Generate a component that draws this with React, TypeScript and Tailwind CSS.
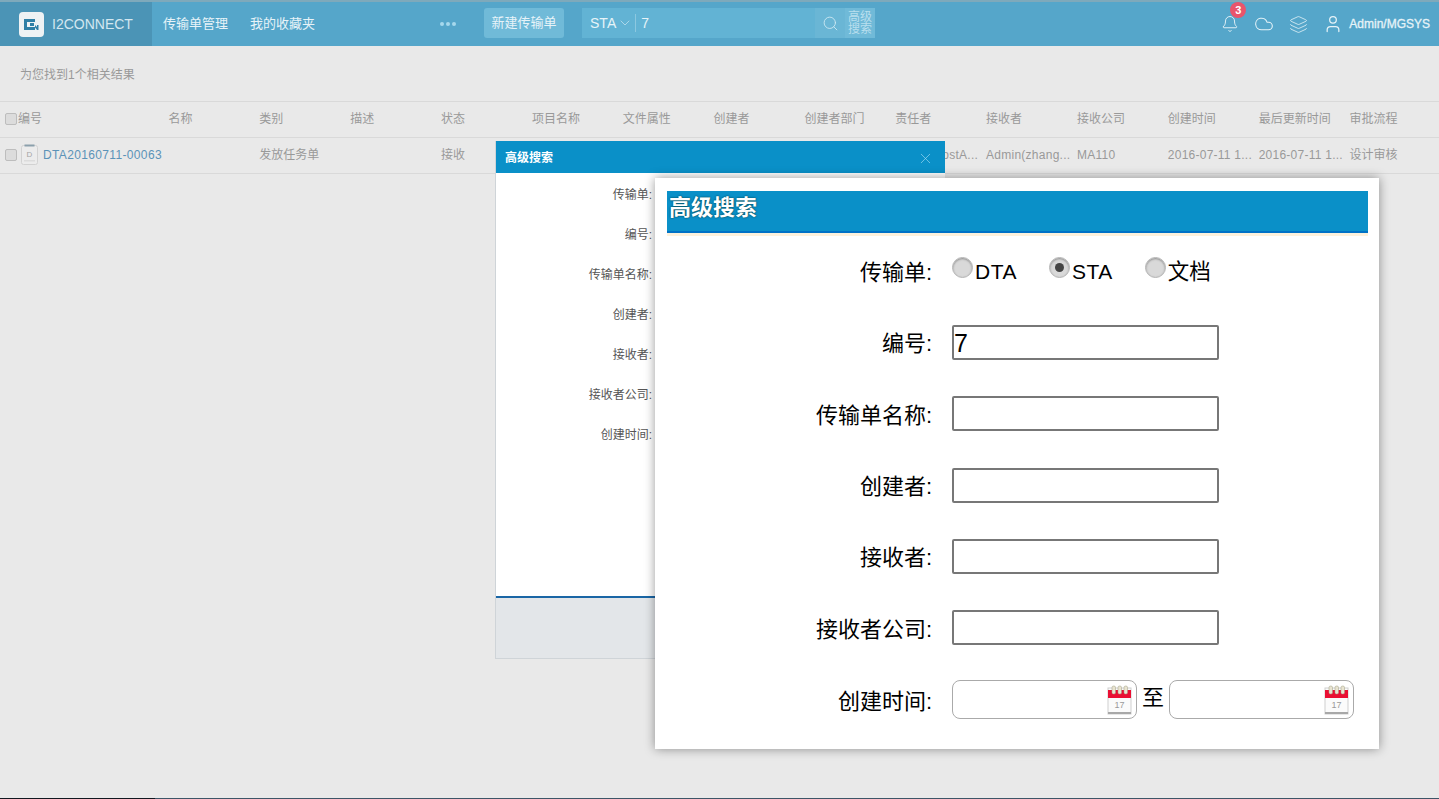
import { Bell, Cloud, Layers, User, Search, ChevronDown, X } from "lucide-react";

const cjk = "[font-family:Liberation_Sans,Arial,Noto_Sans_CJK_SC,sans-serif]";

const headers = ["名称", "类别", "描述", "状态", "项目名称", "文件属性", "创建者", "创建者部门", "责任者", "接收者", "接收公司", "创建时间", "最后更新时间", "审批流程"];
const cells = ["", "发放任务单", "", "接收", "", "", "", "", "", "Admin(zhang...", "MA110", "2016-07-11 1...", "2016-07-11 1...", "设计审核"];
const modalLabels = ["传输单:", "编号:", "传输单名称:", "创建者:", "接收者:", "接收者公司:", "创建时间:"];

function Check() {
  return <span className="block w-3 h-3 shrink-0 rounded-[2px] border border-[#bdbdbd] bg-[#dcdcdc]" />;
}

function Logo() {
  return (
    <svg width="25" height="25" viewBox="0 0 25 25">
      <rect width="25" height="25" rx="4" fill="#eef2f4" />
      <path d="M5 7h11v3H8v5h8v3H5z" fill="#2f7fa6" />
      <path d="M11 11h4v3h-4z" fill="#2f7fa6" />
      <path d="M16 13l2 2v-2h1.5v5H18l-2-2.500z" fill="#2f7fa6" />
    </svg>
  );
}

function FileIcon() {
  return (
    <svg width="17" height="21" viewBox="0 0 17 21" className="block shrink-0">
      <rect x="0.500" y="1.500" width="16" height="19" rx="2" fill="#ececec" stroke="#d2d2d2" />
      <rect x="3.500" y="0.500" width="10" height="2" fill="#8ba0ac" />
      <text x="8.500" y="13" textAnchor="middle" fontSize="8" fill="#a5a5a5" fontFamily="Liberation Sans">D</text>
      <rect x="3" y="16" width="11" height="1.500" fill="#dcdcdc" />
    </svg>
  );
}

function Calendar() {
  return (
    <svg width="26" height="30" viewBox="0 0 26 30" className="block shrink-0">
      <rect x="1" y="3" width="23" height="26" fill="#fbfbfb" stroke="#cfcfcf" />
      <rect x="1" y="5" width="23" height="8" fill="#ea0f33" />
      <rect x="5" y="1" width="3.500" height="8" rx="1.500" fill="#e9e4d0" stroke="#9c9c80" strokeWidth="0.500" />
      <rect x="11" y="1" width="3.500" height="8" rx="1.500" fill="#e9e4d0" stroke="#9c9c80" strokeWidth="0.500" />
      <rect x="17" y="1" width="3.500" height="8" rx="1.500" fill="#e9e4d0" stroke="#9c9c80" strokeWidth="0.500" />
      <text x="12.500" y="23" textAnchor="middle" fontSize="9" fill="#9a9a9a" fontFamily="Liberation Sans">17</text>
      <rect x="1" y="27" width="23" height="2" fill="#a8a8a8" />
    </svg>
  );
}

function Radio({ on }: { on?: boolean }) {
  return (
    <span className="flex items-center justify-center w-[21px] h-[21px] -mt-2 shrink-0 rounded-full border border-[#b5b5b5] bg-[#d9d9d9] shadow-[inset_0_1px_2px_#8f8f8f]">
      {on && <span className="block w-[9px] h-[9px] rounded-full bg-[#444]" />}
    </span>
  );
}

function FormRow({ label, children }: { label: string; children: React.ReactNode }) {
  return (
    <div className="flex items-center h-[71.300px]">
      <div className="w-[265px] mt-1 text-right text-[22px] leading-none text-black">{label}</div>
      <div className="ml-5 flex items-center">{children}</div>
    </div>
  );
}

function TextBox({ value }: { value?: string }) {
  return (
    <div className="w-[267px] h-[35px] border-2 border-[#777] rounded-[2px] bg-white text-[25px] leading-8 text-black">
      {value}
    </div>
  );
}

function DateBox() {
  return (
    <div className="w-[185px] h-[39px] flex items-center justify-end rounded-[8px] border border-[#aaa] bg-white">
      <Calendar />
      <span className="w-[3px]" />
    </div>
  );
}

export default function App() {
  return (
    <div className={`relative w-[1439px] h-[799px] overflow-hidden flex flex-col bg-[#e9e9e9] ${cjk}`}>
      <header className="h-[46px] shrink-0 flex items-stretch border-t-2 border-[#7ea9bb] bg-[#55a6ca] text-[#e6f3f8]">
        <div className="w-[152px] shrink-0 flex items-center pl-[19px] bg-[#4b94b6]">
          <Logo />
          <span className="ml-2 text-sm text-[#d3e7f0]">I2CONNECT</span>
        </div>
        <nav className="flex items-center text-[13px] pl-[11px] gap-[22px]">
          <span>传输单管理</span>
          <span>我的收藏夹</span>
        </nav>
        <div className="ml-[125px] flex items-center gap-[2px]">
          <span className="w-1 h-1 rounded-full bg-[#a6d8ec]" />
          <span className="w-1 h-1 rounded-full bg-[#a6d8ec]" />
          <span className="w-1 h-1 rounded-full bg-[#a6d8ec]" />
        </div>
        <div className="ml-7 flex items-center">
          <button className="w-20 h-[30px] -mt-[2px] rounded-[3px] bg-[#70bad8] text-[13px] text-[#e6f3f8]">新建传输单</button>
          <div className="ml-[18px] w-[233px] h-[30px] -mt-[2px] flex items-center pl-2 bg-[#62b3d4] text-[14px]">
            <span>STA</span>
            <ChevronDown size={16} strokeWidth={1} className="ml-px text-[#cfe8f3]" />
            <span className="ml-[2px] w-px h-[18px] bg-[#8cc8e0]" />
            <span className="ml-[5px]">7</span>
          </div>
          <div className="w-[30px] h-[30px] -mt-[2px] flex items-center justify-center bg-[#6ab6d5]">
            <Search size={17} strokeWidth={1.250} className="text-[#cde8f3]" />
          </div>
          <div className="w-[30px] h-[30px] -mt-[2px] flex items-center justify-center text-center bg-[#70bad8] text-[12px] leading-3 text-[#b9dfee]">
            高级<br />搜索
          </div>
        </div>
        <div className="ml-auto pr-[9px] flex items-center text-[#e6f3f8]">
          <div className="relative">
            <Bell size={18} strokeWidth={1.250} />
            <span className="absolute -top-[13px] left-[9px] w-4 h-4 rounded-full bg-[#e9546b] text-[11px] leading-4 font-bold text-center text-[#fff]">3</span>
          </div>
          <Cloud size={20} strokeWidth={1.250} className="ml-[15px]" />
          <Layers size={19} strokeWidth={1} className="ml-[15px]" />
          <User size={20} strokeWidth={1.500} className="ml-[15px]" />
          <span className="ml-[6px] text-xs text-[#e6f3f8] [-webkit-text-stroke:0.300px_#e6f3f8]">Admin/MGSYS</span>
        </div>
      </header>

      <main className="flex-1 text-xs text-[#999]">
        <div className="h-[55px] flex items-center pl-5 pt-[2px]">为您找到1个相关结果</div>
        <div className="grid grid-cols-[168.500px_repeat(14,90.850px)] items-center h-[37px] pb-[2px] border-y border-[#d9d9d9]">
          <div className="flex items-center pl-[5px]">
            <Check />
            <span className="ml-px">编号</span>
          </div>
          {headers.map((h) => (
            <div key={h} className="whitespace-nowrap">{h}</div>
          ))}
        </div>
        <div className="grid grid-cols-[168.500px_repeat(14,90.850px)] items-center h-[36px] pb-[2px] border-b border-[#d9d9d9]">
          <div className="flex items-center pl-[5px]">
            <Check />
            <span className="ml-1"><FileIcon /></span>
            <span className="ml-[5px] tracking-[0.350px] text-[#5b93b8]">DTA20160711-00063</span>
          </div>
          {cells.map((c, i) => (
            <div key={i} className={`whitespace-nowrap ${i === 8 ? "text-right pr-2" : ""} ${i >= 8 && i <= 12 ? "tracking-[0.250px]" : ""}`}>
              {i === 8 ? "Admin(postA..." : c}
            </div>
          ))}
        </div>
      </main>

      <footer className="h-px shrink-0 flex">
        <div className="w-[155px] bg-[#111820]" />
        <div className="flex-1 bg-[#3d5567]" />
      </footer>

      <section className="absolute left-[495px] top-[141px] w-[450px] h-[518px] flex flex-col border-l border-b border-[#cfd4d8] bg-white">
        <div className="h-8 shrink-0 flex items-center justify-between pl-[9px] pr-[11px] pt-[2px] bg-[#0a90c8] text-xs font-bold text-white">
          <span>高级搜索</span>
          <X size={17} strokeWidth={0.900} className="text-[#a7dcf2]" />
        </div>
        <div className="flex-1 pt-[2px]">
          {modalLabels.map((l) => (
            <div key={l} className="w-[156px] h-10 flex items-center justify-end text-xs text-[#555]">{l}</div>
          ))}
        </div>
        <div className="h-[62px] shrink-0 border-t-2 border-[#1a66a5] bg-[#e3e6e9]" />
      </section>

      <section className="absolute left-[655px] top-[178px] w-[724px] h-[571px] pl-3 pr-[11px] pt-[13px] bg-white shadow-[0_0_10px_rgba(0,0,0,0.4)]">
        <div className="h-[42px] flex items-center pl-[2px] pb-[8px] border-b-2 border-[#0072c6] bg-[#0a90c8] shadow-[0_3px_0_#fdf1dc] text-[22px] font-bold text-white [text-shadow:0_0_2px_#033]">
          高级搜索
        </div>
        <div className="pt-[2.500px]">
          <FormRow label="传输单:">
            <Radio />
            <span className="ml-[2px] text-[21px] leading-none tracking-[0.500px] text-black">DTA</span>
            <span className="ml-[32px]"><Radio on /></span>
            <span className="ml-[2px] text-[21px] leading-none tracking-[0.500px] text-black">STA</span>
            <span className="ml-[32px]"><Radio /></span>
            <span className="ml-[2px] mt-[3px] text-[21.500px] leading-none text-black">文档</span>
          </FormRow>
          <FormRow label="编号:"><TextBox value="7" /></FormRow>
          <FormRow label="传输单名称:"><TextBox /></FormRow>
          <FormRow label="创建者:"><TextBox /></FormRow>
          <FormRow label="接收者:"><TextBox /></FormRow>
          <FormRow label="接收者公司:"><TextBox /></FormRow>
          <div className="pt-px">
            <FormRow label="创建时间:">
              <DateBox />
              <span className="mx-[5px] -mt-1 text-[22px] leading-none text-black">至</span>
              <DateBox />
            </FormRow>
          </div>
        </div>
      </section>
    </div>
  );
}
